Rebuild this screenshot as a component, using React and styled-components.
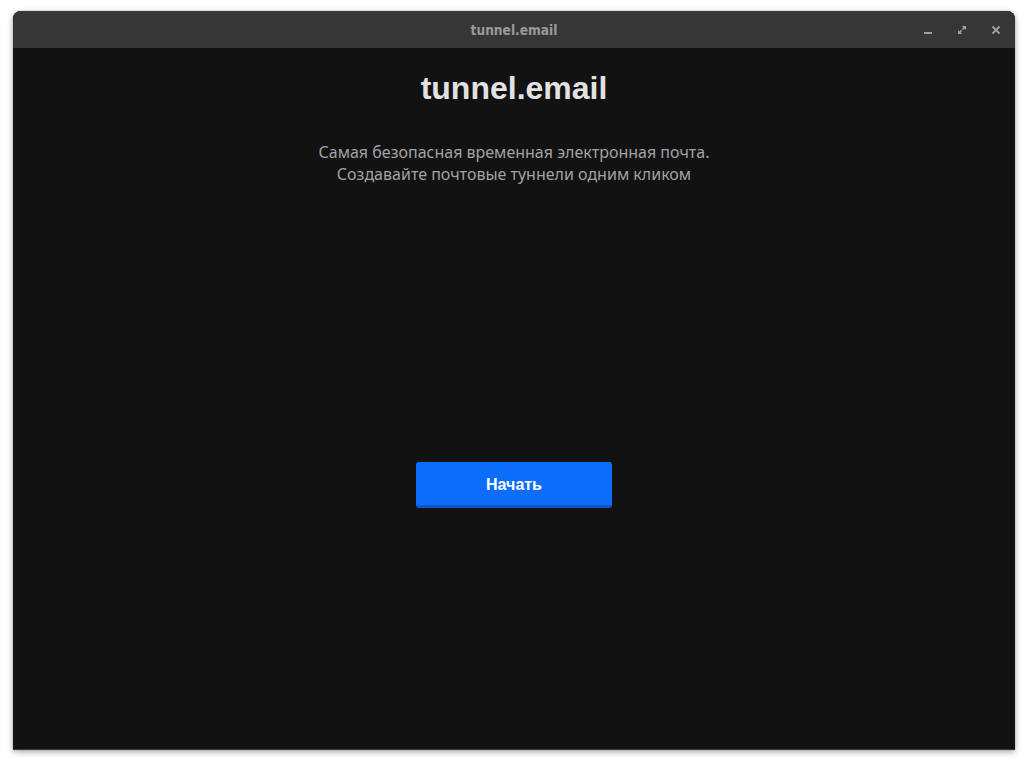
import React from 'react';
import styled, { createGlobalStyle } from 'styled-components';

const GlobalStyle = createGlobalStyle`
  html, body {
    margin: 0;
    padding: 0;
    background: #ffffff;
  }
  #root {
    width: 1028px;
    height: 766px;
  }
`;

const Desktop = styled.div`
  box-sizing: border-box;
  width: 1028px;
  height: 766px;
  padding: 11px 13px 16px 13px;
  display: flex;
`;

const Window = styled.div`
  flex: 1;
  display: flex;
  flex-direction: column;
  border-radius: 8px 8px 0 0;
  overflow: hidden;
  background: #121212;
  box-shadow: 0 2px 6px rgba(0, 0, 0, 0.35), 0 0 1px rgba(0, 0, 0, 0.5);
  border-bottom: 1px solid #3a3a3a;
`;

const TitleBar = styled.div`
  height: 37px;
  flex-shrink: 0;
  background: #363636;
  display: flex;
  align-items: center;
  justify-content: center;
  position: relative;
  font-family: 'DejaVu Sans Condensed', 'DejaVu Sans', sans-serif;
  font-size: 13.6px;
  font-weight: bold;
  color: #9a9a9a;
`;

const Controls = styled.div`
  position: absolute;
  right: 9px;
  top: 0;
  height: 100%;
  display: flex;
  align-items: center;
  gap: 14px;
`;

const ControlButton = styled.div`
  width: 20px;
  height: 20px;
  display: flex;
  align-items: center;
  justify-content: center;
  color: #a0a0a0;
`;

const Content = styled.main`
  flex: 1;
  display: flex;
  flex-direction: column;
  align-items: center;
  padding-top: 21px;
`;

const Heading = styled.h1`
  margin: 0;
  font-family: 'Liberation Sans', Arial, sans-serif;
  font-size: 32px;
  line-height: 38px;
  font-weight: bold;
  color: #e2e2e2;
`;

const Tagline = styled.p`
  margin: 34px 0 0 0;
  font-family: 'Noto Sans', 'Open Sans', sans-serif;
  font-size: 16px;
  line-height: 22px;
  color: #a2a2a2;
  text-align: center;
`;

const StartButton = styled.button`
  margin-top: 277px;
  width: 196px;
  height: 46px;
  box-sizing: border-box;
  border: none;
  border-bottom: 3px solid #0a58ca;
  border-radius: 3px;
  background: #0d6efd;
  color: #ffffff;
  font-family: 'Liberation Sans', Arial, sans-serif;
  font-size: 16px;
  font-weight: bold;
  padding-top: 4px;
  cursor: pointer;
`;

function App() {
  return (
    <>
      <GlobalStyle />
      <Desktop>
        <Window>
          <TitleBar>
            tunnel.email
            <Controls>
              <ControlButton>
                <svg width="10" height="10" viewBox="0 0 10 10">
                  <rect x="1" y="7" width="8" height="2" fill="currentColor" />
                </svg>
              </ControlButton>
              <ControlButton>
                <svg width="10" height="10" viewBox="0 0 10 10" fill="currentColor">
                  <path d="M5 1h4v4L7.6 3.6 6 5.2 4.8 4 6.4 2.4z" />
                  <path d="M1 5v4h4L3.6 7.6 5.2 6 4 4.8 2.4 6.4z" />
                </svg>
              </ControlButton>
              <ControlButton>
                <svg width="10" height="10" viewBox="0 0 10 10">
                  <path d="M1.5 1.5l7 7M8.5 1.5l-7 7" stroke="currentColor" strokeWidth="1.8" />
                </svg>
              </ControlButton>
            </Controls>
          </TitleBar>
          <Content>
            <Heading>tunnel.email</Heading>
            <Tagline>
              Самая безопасная временная электронная почта.
              <br />
              Создавайте почтовые туннели одним кликом
            </Tagline>
            <StartButton>Начать</StartButton>
          </Content>
        </Window>
      </Desktop>
    </>
  );
}

export default App;
